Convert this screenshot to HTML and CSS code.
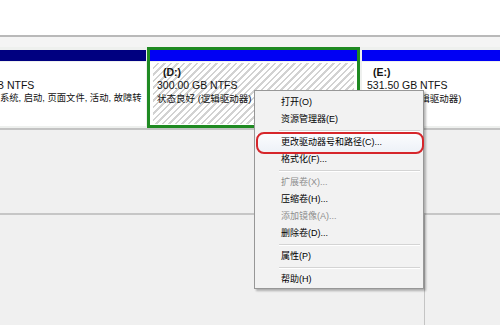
FILE: index.html
```html
<!DOCTYPE html>
<html>
<head>
<meta charset="utf-8">
<link rel="stylesheet" href="styles.css">
</head>
<body>
<div class="top"></div>
<div class="gap"></div>
<div class="disk">
  <div class="part p1">
    <div class="hdr navy"></div>
    <div class="body">
      <div class="line"></div>
      <div class="line lat shift">B NTFS</div>
      <div class="line cjk tight">系统, 启动, 页面文件, 活动, 故障转</div>
    </div>
  </div>
  <div class="part pd">
    <div class="hdr blue"></div>
    <div class="body">
      <div class="hatch">
        <div class="line lat bold ind">(D:)</div>
        <div class="line lat">300.00 GB NTFS</div>
        <div class="line cjk">状态良好 (逻辑驱动器)</div>
      </div>
    </div>
  </div>
  <div class="part pe">
    <div class="hdr blue"></div>
    <div class="body">
      <div class="line lat bold ind">(E:)</div>
      <div class="line lat">531.50 GB NTFS</div>
      <div class="line cjk">状态良好 (逻辑驱动器)</div>
    </div>
  </div>
</div>
<div class="mid"></div>
<div class="bottom">
  <div class="bl"></div>
  <div class="br"></div>
</div>

<div class="menu">
  <div class="item">打开(O)</div>
  <div class="item">资源管理器(E)</div>
  <div class="sep"></div>
  <div class="item hl">更改驱动器号和路径(C)...</div>
  <div class="item">格式化(F)...</div>
  <div class="sep"></div>
  <div class="item dis">扩展卷(X)...</div>
  <div class="item">压缩卷(H)...</div>
  <div class="item dis">添加镜像(A)...</div>
  <div class="item">删除卷(D)...</div>
  <div class="sep"></div>
  <div class="item">属性(P)</div>
  <div class="sep"></div>
  <div class="item">帮助(H)</div>
</div>
</body>
</html>
```

FILE: styles.css
```css
* { box-sizing: border-box; }
html, body { margin: 0; padding: 0; }
body {
  width: 500px;
  height: 325px;
  overflow: hidden;
  background: #f0f0f0;
  font-family: "Liberation Sans", "Noto Sans CJK SC", sans-serif;
  color: #111;
  position: relative;
}
.top {
  height: 37px;
  background: #fff;
  border-bottom: 2px solid #b9b9b9;
}
.gap {
  height: 10px;
  background: #f4f4f4;
}
.disk {
  display: flex;
  height: 83px;
  border-bottom: 2px solid #c3c3c3;
  background: #eef0ee;
}
.part {
  display: flex;
  flex-direction: column;
  overflow: hidden;
}
.p1 {
  width: 146px;
  margin-right: 1px;
  padding: 3px 0 2px;
}
.pd {
  width: 213px;
  margin-right: 1px;
  border: 3px solid #1f8a22;
}
.pe {
  flex: 1;
  padding: 3px 0 2px 1px;
}
.hdr {
  height: 11px;
  flex: none;
}
.navy { background: #000080; }
.blue { background: #0000f4; }
.body {
  flex: 1;
  margin-top: 1px;
  background: #fff;
  padding-top: 4px;
  overflow: hidden;
}
.pd .body {
  padding: 1px 3px 1px;
  display: flex;
}
.pe .body { padding-left: 5px; }
.hatch {
  flex: 1;
  padding: 3px 0 0 4px;
  background: repeating-linear-gradient(135deg, #ffffff 0 3px, #d2d2d2 3px 4.6px);
}
.line {
  height: 13px;
  line-height: 13px;
  white-space: nowrap;
}
.lat { font-size: 10.5px; }
.cjk { font-size: 9.5px; }
.tight { font-size: 9.3px; }
.bold { font-weight: bold; }
.ind { padding-left: 6px; }
.shift { margin-left: -3px; }
.mid {
  height: 85px;
  border-bottom: 2px solid #c6c6c6;
}
.bottom {
  display: flex;
  height: 110px;
}
.bl { width: 424px; }
.br {
  flex: 1;
  border-left: 1px solid #c4c4c4;
}
.menu {
  position: absolute;
  left: 254px;
  top: 90px;
  width: 170px;
  padding: 3px 0 0 1px;
  background: #f2f2f2;
  border: 1px solid #979797;
  box-shadow: 2px 2px 2px rgba(0, 0, 0, 0.28);
}
.item {
  height: 17px;
  line-height: 17px;
  padding-left: 25px;
  font-size: 9px;
  color: #000;
  white-space: nowrap;
  position: relative;
}
.item.dis { color: #8e8e8e; }
.item.hl {
  background: linear-gradient(#fbfcfe, #eef2f8);
}
.item.hl::after {
  content: "";
  position: absolute;
  left: 0;
  right: -1px;
  top: -2px;
  bottom: -3px;
  border: 2px solid #d6262b;
  border-radius: 8px;
}
.sep {
  height: 6px;
  margin: 0 3px 0 23px;
  border-top: 2px solid transparent;
  position: relative;
}
.sep::before {
  content: "";
  display: block;
  height: 1px;
  background: #d4d4d4;
  border-bottom: 1px solid #fff;
  box-sizing: content-box;
}
```
